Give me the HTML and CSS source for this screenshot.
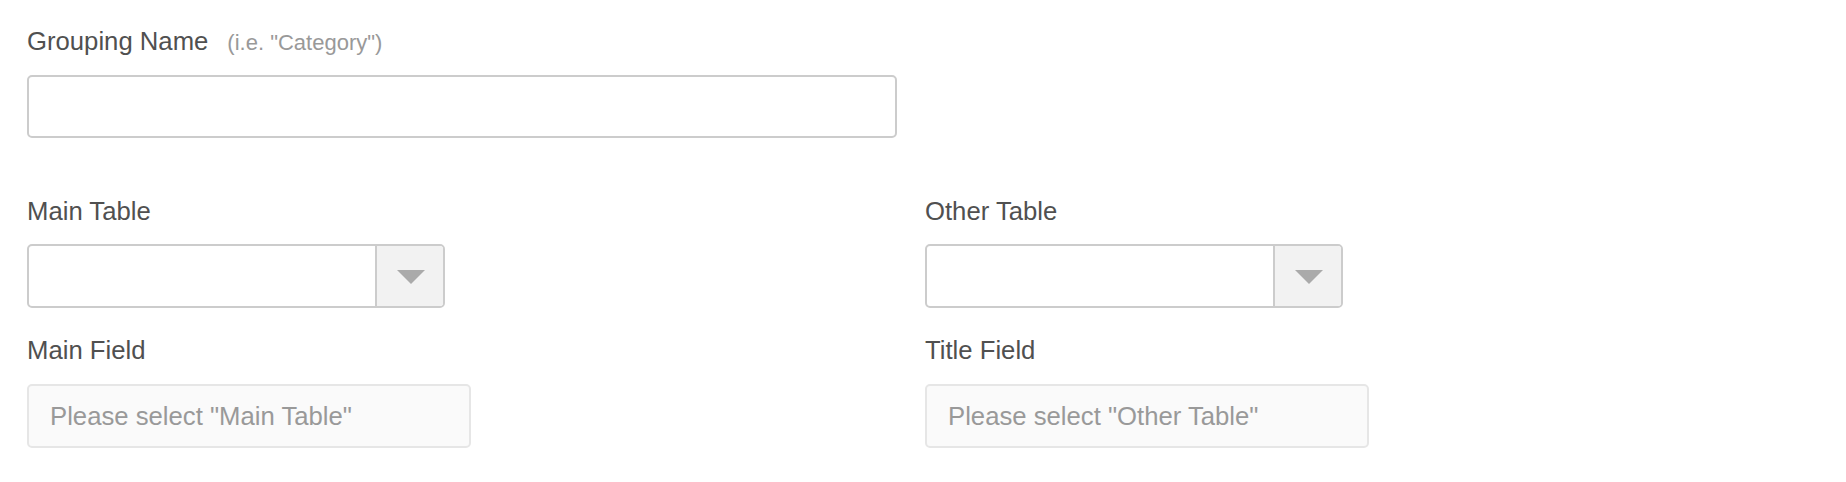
FILE: index.html
```html
<!DOCTYPE html>
<html lang="en">
<head>
<meta charset="utf-8">
<title>Grouping</title>
<link rel="stylesheet" href="styles.css">
</head>
<body>
<form class="form">
  <div class="group group-name">
    <label class="label">Grouping Name<span class="hint">(i.e. "Category")</span></label>
    <input class="input input-wide" type="text">
  </div>

  <div class="grid">
    <div class="col">
      <div class="group">
        <label class="label">Main Table</label>
        <div class="select">
          <span class="select-value"></span>
          <span class="select-btn"><span class="caret"></span></span>
        </div>
      </div>
      <div class="group group-next">
        <label class="label">Main Field</label>
        <input class="input input-disabled" type="text" placeholder="Please select &quot;Main Table&quot;" disabled>
      </div>
    </div>
    <div class="col">
      <div class="group">
        <label class="label">Other Table</label>
        <div class="select">
          <span class="select-value"></span>
          <span class="select-btn"><span class="caret"></span></span>
        </div>
      </div>
      <div class="group group-next">
        <label class="label">Title Field</label>
        <input class="input input-disabled" type="text" placeholder="Please select &quot;Other Table&quot;" disabled>
      </div>
    </div>
  </div>
</form>
</body>
</html>
```

FILE: styles.css
```css
* {
  box-sizing: border-box;
}

html, body {
  margin: 0;
  background: #ffffff;
}

body {
  font-family: "Liberation Sans", Arial, sans-serif;
  color: #555555;
  padding: 26px 0 0 27px;
}

.form {
  margin: 0;
}

.group {
  display: flex;
  flex-direction: column;
  align-items: flex-start;
}

.label {
  display: block;
  font-size: 25.7px;
  line-height: 30px;
  height: 30px;
  color: #505050;
  margin-bottom: 18px;
  white-space: nowrap;
}

.group-name .label,
.group-next .label {
  margin-bottom: 19px;
}

.hint {
  font-size: 22px;
  color: #999999;
  margin-left: 19px;
}

.input {
  display: block;
  font-family: "Liberation Sans", Arial, sans-serif;
  font-size: 25.7px;
  height: 64px;
  border: 2px solid #cccccc;
  border-radius: 5px;
  background: #ffffff;
  padding: 0 21px;
  margin: 0;
  outline: none;
  color: #555555;
}

.input-wide {
  width: 870px;
  height: 63px;
}

.input-disabled {
  width: 444px;
  background: #fafafa;
  border-color: #e6e6e6;
}

.input-disabled::placeholder {
  color: #999999;
  opacity: 1;
}

.grid {
  display: grid;
  grid-template-columns: 898px 444px;
  margin-top: 58px;
}

.group-next {
  margin-top: 27px;
}

.select {
  display: flex;
  width: 418px;
  height: 64px;
  border: 2px solid #cccccc;
  border-radius: 5px;
  background: #ffffff;
  overflow: hidden;
}

.select-value {
  flex: 1;
}

.select-btn {
  width: 68px;
  border-left: 2px solid #cccccc;
  background: #f2f2f2;
  display: flex;
  align-items: center;
  justify-content: center;
  padding-left: 2px;
}

.caret {
  width: 0;
  height: 0;
  border-left: 14px solid transparent;
  border-right: 14px solid transparent;
  border-top: 14px solid #aaaaaa;
  margin-top: 1px;
}
```
